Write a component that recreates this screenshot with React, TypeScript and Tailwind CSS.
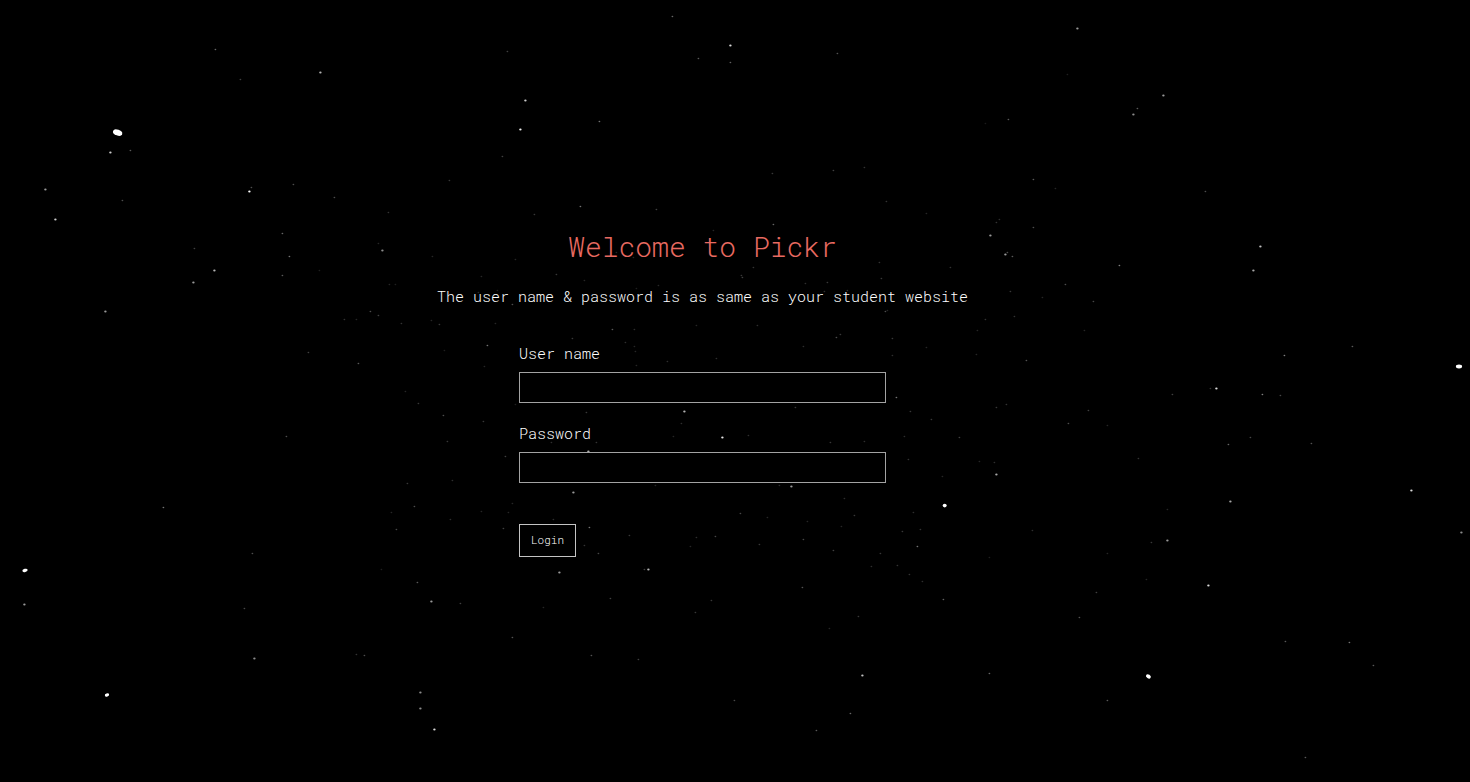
import { useState } from "react";

// x, y, brightness (0-100)
const STARS: [number, number, number][] = [
  [215, 49, 40], [240, 79, 25], [320, 72, 70], [110, 152, 80], [130, 150, 35], [45, 189, 60], [249, 191, 100], [251, 187, 30],
  [293, 184, 30], [122, 200, 30], [334, 197, 30], [55, 219, 80], [388, 212, 20], [282, 233, 40], [194, 248, 25], [214, 270, 70],
  [289, 256, 45], [378, 243, 15], [382, 250, 55], [193, 282, 60], [282, 275, 35], [319, 270, 12], [105, 311, 60], [389, 284, 15],
  [395, 284, 12], [370, 311, 30], [378, 315, 25], [344, 319, 20], [356, 319, 15], [401, 323, 20], [308, 352, 25], [358, 363, 35],
  [432, 256, 15], [515, 259, 15], [556, 274, 22], [481, 276, 15], [584, 280, 15], [636, 288, 12], [658, 285, 15], [478, 292, 15],
  [497, 290, 12], [512, 304, 30], [431, 320, 15], [439, 324, 22], [495, 323, 15], [612, 329, 35], [634, 329, 18], [696, 325, 15],
  [487, 345, 45], [572, 338, 22], [444, 350, 12], [625, 342, 18], [634, 346, 15], [635, 351, 15], [667, 361, 18], [636, 365, 15],
  [484, 366, 15], [515, 404, 12], [633, 257, 15], [616, 252, 15],
  [773, 224, 40], [713, 230, 15], [879, 262, 20], [753, 267, 20], [950, 267, 20], [741, 275, 22], [742, 277, 25], [881, 278, 22],
  [805, 283, 18], [827, 282, 22], [824, 291, 18], [847, 290, 18], [885, 311, 30], [887, 310, 15], [757, 325, 18], [840, 334, 22],
  [836, 337, 30], [803, 346, 18], [892, 338, 22], [926, 347, 15], [892, 355, 18], [977, 330, 15], [976, 354, 15], [716, 358, 18],
  [896, 397, 45], [795, 407, 22],
  [443, 415, 30], [483, 421, 22], [447, 441, 22], [586, 412, 22], [684, 411, 70], [681, 423, 18], [673, 436, 15], [551, 442, 18],
  [596, 442, 20], [588, 451, 70], [505, 456, 25], [452, 480, 18], [573, 492, 60], [655, 485, 15], [512, 503, 15], [481, 511, 15],
  [508, 512, 15], [450, 519, 18], [553, 519, 18], [503, 528, 25], [589, 527, 45], [629, 535, 22], [584, 545, 20], [598, 553, 28],
  [696, 537, 18], [690, 546, 15], [559, 572, 60], [644, 569, 25], [648, 569, 70],
  [910, 411, 22], [931, 419, 22], [722, 437, 90], [748, 435, 18], [830, 442, 22], [864, 441, 18], [904, 436, 18], [959, 437, 25],
  [908, 459, 20], [979, 461, 15], [942, 476, 15], [779, 485, 18], [791, 486, 60], [844, 498, 18], [740, 513, 28], [767, 517, 15],
  [913, 512, 18], [854, 515, 22], [807, 521, 15], [841, 526, 15], [902, 531, 22], [920, 529, 20], [715, 536, 28], [803, 539, 28],
  [759, 544, 22], [917, 546, 45], [833, 550, 25], [880, 553, 22], [871, 566, 18], [897, 565, 20], [909, 574, 20], [922, 581, 18],
  [802, 587, 32], [405, 391, 15], [418, 403, 22], [286, 436, 30], [407, 483, 22], [163, 507, 45], [414, 506, 30], [391, 512, 15],
  [396, 529, 28], [252, 553, 30], [24, 604, 60], [381, 569, 12], [417, 582, 35], [244, 608, 28], [254, 658, 55], [356, 654, 20],
  [364, 655, 30], [420, 692, 55], [420, 708, 55],
  [1077, 28, 60], [1067, 74, 12], [1163, 95, 60], [1137, 108, 35], [1133, 114, 55], [1008, 119, 35], [985, 123, 10], [1033, 179, 35],
  [1055, 188, 15], [1205, 191, 30], [996, 222, 20], [999, 219, 18], [1033, 227, 30], [990, 235, 60], [1007, 252, 30], [1005, 254, 60],
  [1012, 256, 35], [1260, 246, 75], [1119, 265, 50], [1253, 270, 65], [1065, 284, 30], [1010, 291, 22], [1042, 297, 15], [1093, 301, 28],
  [1014, 316, 20], [985, 319, 20], [1084, 330, 15], [1352, 346, 35], [1284, 355, 50], [1026, 360, 32], [1210, 388, 20], [1216, 388, 85],
  [1172, 394, 25], [1262, 394, 50], [1280, 395, 28], [996, 407, 22], [1006, 404, 20], [1088, 410, 25], [1068, 423, 30], [1107, 425, 15],
  [1250, 437, 28], [1228, 444, 40], [1311, 443, 32], [1138, 458, 20], [994, 462, 18], [996, 474, 65], [1411, 490, 85], [1230, 501, 65],
  [1167, 509, 15], [1032, 530, 18], [1167, 540, 60], [1151, 542, 22], [1461, 532, 55], [1107, 553, 15], [989, 557, 12], [1146, 579, 15],
  [1208, 585, 85], [1096, 592, 25], [1079, 617, 32], [1285, 641, 35], [1349, 642, 45], [1373, 665, 35], [989, 673, 40], [1107, 700, 35],
  [1305, 757, 35], [672, 16, 40], [507, 51, 25], [730, 45, 85], [698, 58, 35], [730, 62, 38], [837, 53, 32], [525, 100, 80],
  [520, 129, 95], [599, 121, 45], [502, 156, 25], [449, 180, 22], [534, 214, 22], [580, 206, 45], [656, 209, 25], [772, 173, 22],
  [833, 170, 25], [864, 167, 20], [886, 201, 20], [926, 213, 15], [431, 601, 60], [460, 603, 25], [543, 607, 15], [610, 598, 25],
  [512, 637, 32], [591, 655, 32], [638, 659, 25], [695, 612, 22], [711, 600, 22], [829, 628, 15], [858, 616, 22], [943, 599, 38],
  [862, 675, 75], [734, 700, 28], [850, 713, 40], [816, 730, 35], [434, 729, 85],
];

// cx, cy, rx, ry, rotation
const COMETS: [number, number, number, number, number][] = [
  [117.6, 132.6, 4.8, 2.9, 20],
  [25, 570.4, 2.7, 1.6, -15],
  [107, 695, 2.2, 1.5, -18],
  [1459, 366.5, 3.1, 1.9, 0],
  [1148.4, 676.4, 2.6, 1.9, 32],
  [944.7, 505.6, 2, 1.8, 0],
];

function Starfield() {
  return (
    <svg
      aria-hidden="true"
      viewBox="0 0 1470 782"
      preserveAspectRatio="xMidYMid slice"
      className="absolute inset-0 h-full w-full"
    >
      {STARS.map(([x, y, light]) => (
        <ellipse
          key={`${x}-${y}`}
          cx={x + 0.4}
          cy={y + 0.5}
          rx={light > 50 ? 1.2 : 0.9}
          ry={light > 50 ? 1 : 0.8}
          fill="#fff"
          opacity={light / 100}
        />
      ))}
      {COMETS.map(([x, y, rx, ry, angle]) => (
        <ellipse key={x} cx={x} cy={y} rx={rx} ry={ry} fill="#fff" transform={`rotate(${angle} ${x} ${y})`} />
      ))}
    </svg>
  );
}

type FieldProps = {
  id: string;
  label: string;
  type: string;
  value: string;
  onChange: (value: string) => void;
};

function Field({ id, label, type, value, onChange }: FieldProps) {
  return (
    <div className="flex flex-col gap-2">
      <label htmlFor={id} className="text-[15px] leading-[22px]">
        {label}
      </label>
      <input
        id={id}
        name={id}
        type={type}
        value={value}
        onChange={(e) => onChange(e.target.value)}
        className="h-[31px] w-full border border-[#a3a3a3] bg-black px-2 text-[15px] outline-none focus:border-white"
      />
    </div>
  );
}

export default function App() {
  const [user, setUser] = useState("");
  const [password, setPassword] = useState("");

  return (
    <div className="relative flex min-h-screen items-center overflow-hidden bg-black font-['Roboto_Mono','Liberation_Mono',monospace] font-[350] text-white">
      <Starfield />
      <main className="relative flex w-full flex-col items-center pr-[65px]">
        <h1 className="text-center text-[28px] leading-[44px] text-[#e86a61]">Welcome to Pickr</h1>
        <p className="mt-4 text-center text-[15px] leading-[22px]">
          The user name &amp; password is as same as your student website
        </p>
        <form
          onSubmit={(e) => e.preventDefault()}
          className="mt-[35px] flex w-full max-w-[367px] flex-col items-stretch gap-[19px]"
        >
          <Field id="username" label="User name" type="text" value={user} onChange={setUser} />
          <Field id="password" label="Password" type="password" value={password} onChange={setPassword} />
          <button
            type="submit"
            className="mt-[22px] h-[33px] self-start border border-[#c4c4c4] bg-black px-[11px] text-[11px] hover:bg-white hover:text-black"
          >
            Login
          </button>
        </form>
      </main>
    </div>
  );
}
